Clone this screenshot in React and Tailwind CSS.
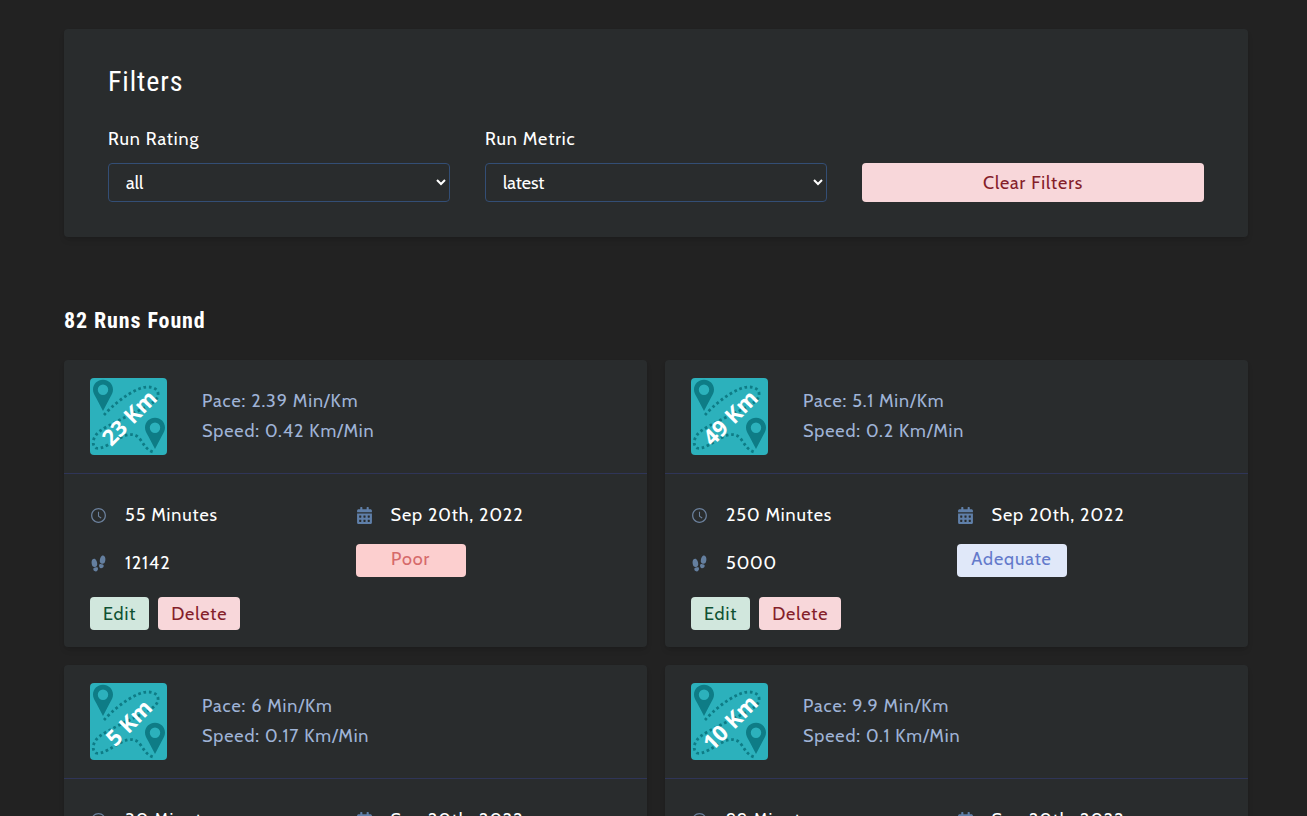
import { useState } from "react";
import { AiOutlineClockCircle } from "react-icons/ai";
import { FaCalendarAlt } from "react-icons/fa";
import { IoFootsteps } from "react-icons/io5";

const RUNS = [
  { id: 1, km: 23, pace: 2.39, speed: 0.42, minutes: 55, date: "Sep 20th, 2022", steps: 12142, rating: "Poor" },
  { id: 2, km: 49, pace: 5.1, speed: 0.2, minutes: 250, date: "Sep 20th, 2022", steps: 5000, rating: "Adequate" },
  { id: 3, km: 5, pace: 6, speed: 0.17, minutes: 30, date: "Sep 20th, 2022", steps: 5000, rating: "Adequate" },
  { id: 4, km: 10, pace: 9.9, speed: 0.1, minutes: 99, date: "Sep 20th, 2022", steps: 5000, rating: "Adequate" },
];

const RATING_STYLES = {
  Poor: "bg-[#fccfcf] text-[#d66a6a]",
  Adequate: "bg-[#e0e8f9] text-[#647acb]",
};

function Pin({ x, y }) {
  return (
    <path
      transform={`translate(${x} ${y})`}
      fillRule="evenodd"
      d="M0 -10.2C-5.6 -10.2 -10 -5.9 -10 -.4C-10 2.6 -8.6 5.2 -6.8 8L0 21L6.8 8C8.600 5.2 10 2.6 10 -.4C10 -5.900 5.600 -10.2 0 -10.2ZM0 -5.4A5.200 5.200 0 1 1 0 5A5.200 5.200 0 1 1 0 -5.4Z"
      fill="#0e7c86"
    />
  );
}

function DistanceBadge({ km }) {
  return (
    <div className="relative flex size-[77px] shrink-0 items-center justify-center overflow-hidden rounded bg-[#2cb1bc]">
      <svg className="absolute inset-0 size-full" viewBox="0 0 77 77" aria-hidden="true">
        <path
          d="M14 37C22 28 36 16 50 10.500C58 7.500 67 9 68 15C69 22 60 27 50 32C36 39 20 46 10 53C3 58 1 67 6 70C12 72 22 64 32 59C40 55 46 56 50 61C54 67 57 72 63 74"
          fill="none"
          stroke="#0e7c86"
          strokeWidth="2.8"
          strokeDasharray="2.700 2.700"
        />
        <Pin x={13} y={12} />
        <Pin x={65} y={50} />
      </svg>
      <span className="relative -rotate-45 font-['Noto_Sans','Open_Sans',sans-serif] text-[22px] leading-7 font-bold tracking-normal whitespace-nowrap text-white">
        {km} Km
      </span>
    </div>
  );
}

function RunCard({ run }) {
  return (
    <article className="rounded bg-[#292c2d] shadow-md">
      <header className="flex items-center gap-[35px] border-b border-[#2f3558] px-[26px] py-[18px]">
        <DistanceBadge km={run.km} />
        <div className="pb-0.5 leading-[30px] text-[#9fb3d6]">
          <p>Pace: {run.pace} Min/Km</p>
          <p>Speed: {run.speed} Km/Min</p>
        </div>
      </header>
      <div className="px-[26px] py-[17px]">
        <div className="grid grid-cols-2 text-white">
          <p className="flex h-12 items-center">
            <AiOutlineClockCircle className="mr-[18px] size-[17px] text-[#6b809c]" />
            {run.minutes} Minutes
          </p>
          <p className="flex h-12 items-center">
            <FaCalendarAlt className="mr-[18px] size-[17px] text-[#5f7fa8]" />
            {run.date}
          </p>
          <p className="flex h-12 items-center">
            <IoFootsteps className="mr-[18px] size-[17px] text-[#647f9f]" />
            {run.steps}
          </p>
          <div className="pt-[5px]">
            <span
              className={`flex h-[33px] w-[110px] items-center justify-center rounded pb-1 ${RATING_STYLES[run.rating]}`}
            >
              {run.rating}
            </span>
          </div>
        </div>
        <div className="mt-[10px] flex gap-[9px]">
          <button type="button" className="h-[33px] rounded bg-[#d1e7dd] px-[13px] text-[#0f5132]">
            Edit
          </button>
          <button type="button" className="h-[33px] rounded bg-[#f8d7da] px-[13px] text-[#842029]">
            Delete
          </button>
        </div>
      </div>
    </article>
  );
}

function FilterSelect({ id, label, options, value, onChange }) {
  return (
    <div>
      <label htmlFor={id} className="mb-[10px] block text-white">
        {label}
      </label>
      <select
        id={id}
        value={value}
        onChange={(event) => onChange(event.target.value)}
        className="block h-[39px] w-full rounded border border-[#334e75] bg-[#292c2d] px-[13px] tracking-normal text-white"
      >
        {options.map((option) => (
          <option key={option}>{option}</option>
        ))}
      </select>
    </div>
  );
}

export default function App() {
  const [rating, setRating] = useState("all");
  const [metric, setMetric] = useState("latest");

  const clearFilters = () => {
    setRating("all");
    setMetric("latest");
  };

  return (
    <main className="min-h-screen bg-[#222222] pt-[29px] pr-[59px] pb-8 pl-16 font-['Cabin','Lato',sans-serif] text-lg leading-7 tracking-wider">
      <section className="rounded bg-[#292c2d] px-11 py-[35px] shadow-md">
        <h1 className="font-['Roboto_Condensed','Roboto',sans-serif] text-[28px] leading-9 text-white">Filters</h1>
        <form className="mt-[25px] grid grid-cols-3 items-end gap-[35px]">
          <FilterSelect
            id="run-rating"
            label="Run Rating"
            options={["all", "Poor", "Adequate"]}
            value={rating}
            onChange={setRating}
          />
          <FilterSelect
            id="run-metric"
            label="Run Metric"
            options={["latest", "oldest"]}
            value={metric}
            onChange={setMetric}
          />
          <button type="button" onClick={clearFilters} className="h-[39px] rounded bg-[#f8d7da] text-[#842029]">
            Clear Filters
          </button>
        </form>
      </section>

      <section className="mt-[68px]">
        <h2 className="font-['Roboto_Condensed','Roboto',sans-serif] text-[22px] leading-8 font-bold text-white">
          82 Runs Found
        </h2>
        <div className="mt-[23px] grid grid-cols-2 gap-[18px]">
          {RUNS.map((run) => (
            <RunCard key={run.id} run={run} />
          ))}
        </div>
      </section>
    </main>
  );
}
